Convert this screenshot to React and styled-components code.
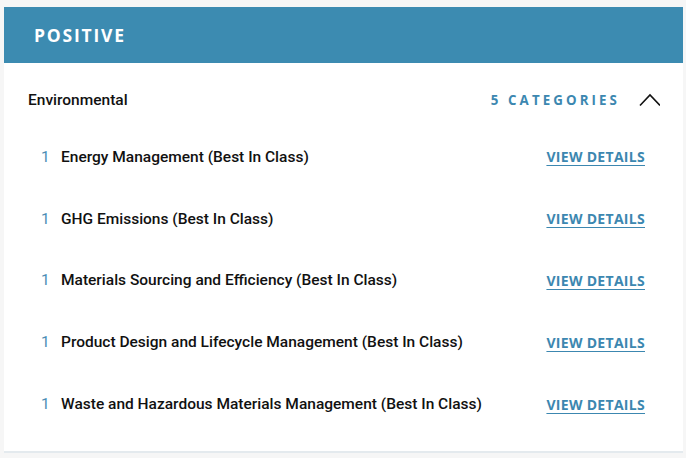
import React from "react";
import styled, { createGlobalStyle } from "styled-components";

const Global = createGlobalStyle`
  html, body { margin: 0; padding: 0; background: #f6f6f6; }
  body { font-family: "Roboto", "Liberation Sans", sans-serif; }
`;

const Page = styled.div`
  padding: 7px 3px 6px 4px;
`;

const Card = styled.section`
  background: #ffffff;
  border-bottom: 2px solid #e4eaee;
`;

const Header = styled.header`
  height: 56px;
  background: #3c8bb1;
  display: flex;
  align-items: center;
  padding-left: 30px;
`;

const Title = styled.h2`
  margin: 0;
  color: #ffffff;
  font-family: "Open Sans", "Liberation Sans", sans-serif;
  font-weight: 700;
  font-size: 17.5px;
  letter-spacing: 1.8px;
`;

const Body = styled.div`
  padding: 26px 23px 16px 24px;
`;

const SectionHead = styled.div`
  display: flex;
  align-items: center;
  height: 22px;
`;

const SectionName = styled.span`
  font-family: "Roboto", sans-serif;
  font-weight: 500;
  font-size: 15.5px;
  color: #111;
  flex: 1;
`;

const Count = styled.span`
  font-family: "Open Sans", "Liberation Sans", sans-serif;
  font-weight: 700;
  font-size: 13.3px;
  letter-spacing: 3.1px;
  color: #3c87b0;
  margin-right: 18px;
`;

const Chevron = styled.svg`
  width: 22px;
  height: 14px;
  display: block;
`;

const List = styled.ul`
  list-style: none;
  margin: 15px 0 0;
  padding: 0 15px 0 13px;
`;

const Item = styled.li`
  height: 61.8px;
  display: flex;
  align-items: center;
`;

const Num = styled.span`
  width: 20px;
  font-family: "Roboto", sans-serif;
  font-weight: 400;
  font-size: 15.5px;
  color: #4a8db5;
`;

const Label = styled.span`
  flex: 1;
  font-family: "Roboto", sans-serif;
  font-weight: 500;
  font-size: 15.5px;
  color: #111;
`;

const Link = styled.a`
  font-family: "Open Sans", "Liberation Sans", sans-serif;
  font-weight: 700;
  font-size: 14px;
  letter-spacing: 0.3px;
  color: #3c87b0;
  text-decoration: underline;
  text-underline-offset: 3px;
  cursor: pointer;
`;

const items = [
  "Energy Management (Best In Class)",
  "GHG Emissions (Best In Class)",
  "Materials Sourcing and Efficiency (Best In Class)",
  "Product Design and Lifecycle Management (Best In Class)",
  "Waste and Hazardous Materials Management (Best In Class)",
];

export default function App() {
  return (
    <>
      <Global />
      <Page>
        <Card>
          <Header>
            <Title>POSITIVE</Title>
          </Header>
          <Body>
            <SectionHead>
              <SectionName>Environmental</SectionName>
              <Count>5 CATEGORIES</Count>
              <Chevron viewBox="0 0 22 14">
                <polyline points="2,12.5 12,2 22,12.5" fill="none" stroke="#111" strokeWidth="1.6" />
              </Chevron>
            </SectionHead>
            <List>
              {items.map((t) => (
                <Item key={t}>
                  <Num>1</Num>
                  <Label>{t}</Label>
                  <Link>VIEW DETAILS</Link>
                </Item>
              ))}
            </List>
          </Body>
        </Card>
      </Page>
    </>
  );
}
